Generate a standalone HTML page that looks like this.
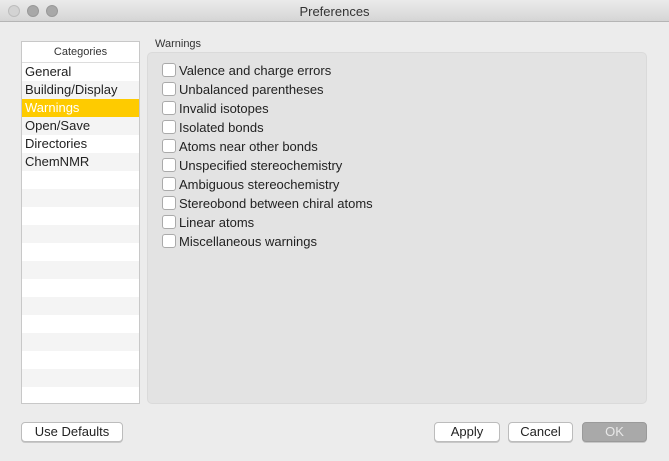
<!DOCTYPE html>
<html><head><style>
*{margin:0;padding:0;box-sizing:border-box}
body{width:669px;height:461px;background:#ececec;font-family:"Liberation Sans",sans-serif;position:relative;overflow:hidden;color:#222}
.title{position:absolute;left:0;top:0;width:669px;height:22px;background:linear-gradient(#ebebeb,#d5d5d5);border-bottom:1px solid #b5b5b5;text-align:center;font-size:13px;line-height:23px;color:#333}
.dot{position:absolute;top:5px;width:12px;height:12px;border-radius:50%;background:#d3d3d3;border:1px solid #bdbdbd}
.list{position:absolute;left:21px;top:41px;width:119px;height:363px;background:#fff;border:1px solid #c8c8c8;overflow:hidden}
.hdr{height:21px;font-size:11px;text-align:center;line-height:20px;color:#333;border-bottom:1px solid #ddd}
.row{height:18px;font-size:13px;line-height:18px;padding-left:3px}
.sel{background:#fecb00!important;color:#fff}
.grp{position:absolute;left:147px;top:52px;width:500px;height:352px;background:#e3e3e3;border-radius:5px;border:1px solid #dadada}
.glab{position:absolute;left:155px;top:38px;font-size:11px;color:#333}
.cb{position:absolute;left:162px;width:14px;height:14px;background:#fff;border:1px solid #aaa;border-radius:3px}
.cl{position:absolute;left:179px;font-size:13px;line-height:16px}
.btn{position:absolute;top:422px;height:20px;background:#fff;border:1px solid #bcbcbc;border-radius:4px;font-size:13px;text-align:center;line-height:18px;box-shadow:0 1px 0 #c8c8c8}
</style></head><body>
<div class="title">Preferences</div>
<div class="dot" style="left:8px"></div><div class="dot" style="left:27px;background:#a8a8a8;border-color:#999"></div><div class="dot" style="left:46px;background:#a8a8a8;border-color:#999"></div>
<div class="list"><div class="hdr">Categories</div>
<div>
<div class="row" style="background:#fff">General</div>
<div class="row" style="background:#f4f4f4">Building/Display</div>
<div class="row sel">Warnings</div>
<div class="row" style="background:#f4f4f4">Open/Save</div>
<div class="row" style="background:#fff">Directories</div>
<div class="row" style="background:#f4f4f4">ChemNMR</div>
<div class="row" style="background:#fff"></div><div class="row" style="background:#f4f4f4"></div>
<div class="row" style="background:#fff"></div><div class="row" style="background:#f4f4f4"></div>
<div class="row" style="background:#fff"></div><div class="row" style="background:#f4f4f4"></div>
<div class="row" style="background:#fff"></div><div class="row" style="background:#f4f4f4"></div>
<div class="row" style="background:#fff"></div><div class="row" style="background:#f4f4f4"></div>
<div class="row" style="background:#fff"></div><div class="row" style="background:#f4f4f4"></div>
<div class="row" style="background:#fff"></div><div class="row" style="background:#f4f4f4"></div>
</div></div>
<div class="glab">Warnings</div>
<div class="grp"></div>
<div class="cb" style="top:63px"></div><div class="cl" style="top:63px">Valence and charge errors</div>
<div class="cb" style="top:82px"></div><div class="cl" style="top:82px">Unbalanced parentheses</div>
<div class="cb" style="top:101px"></div><div class="cl" style="top:101px">Invalid isotopes</div>
<div class="cb" style="top:120px"></div><div class="cl" style="top:120px">Isolated bonds</div>
<div class="cb" style="top:139px"></div><div class="cl" style="top:139px">Atoms near other bonds</div>
<div class="cb" style="top:158px"></div><div class="cl" style="top:158px">Unspecified stereochemistry</div>
<div class="cb" style="top:177px"></div><div class="cl" style="top:177px">Ambiguous stereochemistry</div>
<div class="cb" style="top:196px"></div><div class="cl" style="top:196px">Stereobond between chiral atoms</div>
<div class="cb" style="top:215px"></div><div class="cl" style="top:215px">Linear atoms</div>
<div class="cb" style="top:234px"></div><div class="cl" style="top:234px">Miscellaneous warnings</div>
<div class="btn" style="left:21px;width:102px">Use Defaults</div>
<div class="btn" style="left:434px;width:66px">Apply</div>
<div class="btn" style="left:508px;width:65px">Cancel</div>
<div class="btn" style="left:582px;width:65px;background:#a9a9a9;border-color:#9a9a9a;color:#e8e8e8">OK</div>
</body></html>
